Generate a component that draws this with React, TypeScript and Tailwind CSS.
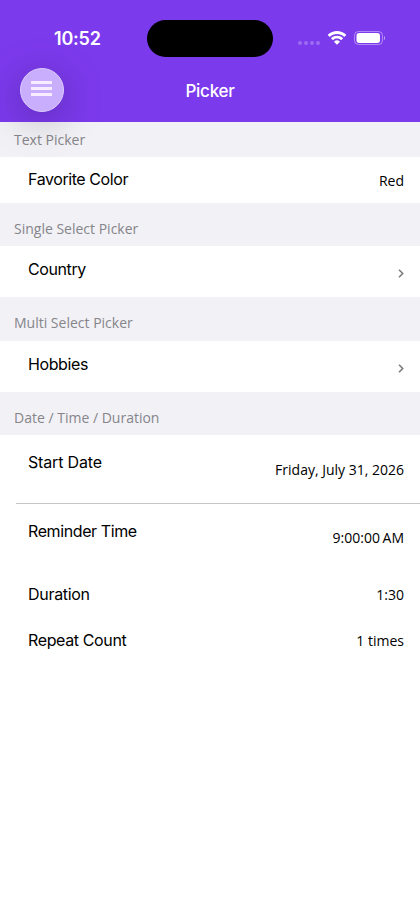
import type {ReactNode} from 'react';

function StatusBar() {
    return (
        <div className="flex h-[68px] items-start pt-5">
            <span className="ml-[54px] mt-[5px] w-[93px] text-[18px] leading-[28px] font-semibold tracking-[-0.2px]">10:52</span>
            <div className="h-[37px] w-[126px] rounded-full bg-black"/>
            <div className="ml-[25px] mt-[21px] flex gap-[2px]">
                <i className="size-[4px] rounded-full bg-white/25"/>
                <i className="size-[4px] rounded-full bg-white/25"/>
                <i className="size-[4px] rounded-full bg-white/25"/>
                <i className="size-[4px] rounded-full bg-white/25"/>
            </div>
            <svg className="ml-[7px] mt-[11px]" width="20" height="14" viewBox="0 0 20 14" fill="white">
                <path d="M10 2.9c2.7 0 5.1 1 7 2.8.2.2.4.2.5 0l1.5-1.5c.2-.2.2-.4 0-.6-5-4.8-13-4.8-18 0-.2.2-.2.4 0 .6l1.500 1.500c.2.2.4.2.6 0C4.900 3.900 7.400 2.900 10 2.900z"/>
                <path d="M10 7.600c1.400 0 2.700.5 3.800 1.400.2.200.4.200.6 0l1.500-1.500c.2-.2.2-.4 0-.6-3.300-3-8.400-3-11.700 0-.2.200-.2.400 0 .6L5.700 9c.2.200.4.200.6 0C7.300 8.100 8.600 7.600 10 7.600z"/>
                <path d="M12.800 11c.2-.2.2-.4 0-.6-1.600-1.400-4-1.400-5.600 0-.2.200-.2.400 0 .6l2.500 2.500c.2.200.4.200.6 0z"/>
            </svg>
            <svg className="ml-[7px] mt-[11px]" width="31" height="14" viewBox="0 0 31 14" fill="none">
                <rect x="0.5" y="0.5" width="28" height="13" rx="4" stroke="white" strokeOpacity="0.4"/>
                <rect x="2.5" y="2" width="23.5" height="10" rx="2.7" fill="white"/>
                <path d="M30 5v4c.7-.3 1.200-1.100 1.200-2S30.700 5.300 30 5z" fill="white" fillOpacity="0.5"/>
            </svg>
        </div>
    );
}

function NavBar() {
    return (
        <div className="grid h-11 grid-cols-[1fr_auto_1fr] items-center px-5">
            <button
                aria-label="Menu"
                className="relative z-10 flex size-11 flex-col items-start gap-[3px] rounded-full border border-[#dccbfd] bg-[#c9aefe] pt-3 pl-2.5 shadow-[0_8px_40px_rgba(0,0,0,0.28)]"
            >
                <i className="h-[3px] w-[21px] bg-[#f7edff]"/>
                <i className="h-[3px] w-[21px] bg-[#f7edff]"/>
                <i className="h-[3px] w-[21px] bg-[#f7edff]"/>
            </button>
            <h1 className="pt-px text-[17px] leading-6 font-medium tracking-[-0.25px]">Picker</h1>
        </div>
    );
}

function Section({title, className, children}: { title: string; className: string; children: ReactNode }) {
    return (
        <section>
            <h2 className={`flex items-end bg-[#f2f1f6] px-3.5 font-['Open_Sans'] text-sm text-[#85858a] ${className}`}>
                {title}
            </h2>
            {children}
        </section>
    );
}

function Row({label, value, className, valueClass}: {
    label: string;
    value?: string;
    className: string;
    valueClass: string;
}) {
    return (
        <div className={`flex items-start justify-between pr-4 pl-7 text-black ${className}`}>
            <span className="text-base leading-6">{label}</span>
            {value ? (
                <span className={`font-['Open_Sans'] text-sm leading-5 tracking-normal ${valueClass}`}>{value}</span>
            ) : (
                <svg className={valueClass} width="6" height="9" viewBox="0 0 6 9" fill="none">
                    <path d="M1 0.7 4.7 4.5 1 8.3" stroke="#7c7c80" strokeWidth="1.6"/>
                </svg>
            )}
        </div>
    );
}

export default function App() {
    return (
        <div className="h-[912px] overflow-hidden bg-white font-['Inter']">
            <header className="h-[122px] bg-[#7c3aed] text-white">
                <StatusBar/>
                <NavBar/>
            </header>
            <main>
                <Section title="Text Picker" className="h-[35px] pb-[7px]">
                    <Row label="Favorite Color" value="Red" className="h-[46px] pt-[10px] tracking-[-0.42px]" valueClass="mt-1"/>
                </Section>
                <Section title="Single Select Picker" className="h-[43px] pb-[7px]">
                    <Row label="Country" className="h-[51px] pt-[11px] tracking-[-0.4px]" valueClass="mt-3"/>
                </Section>
                <Section title="Multi Select Picker" className="h-[44px] pb-2">
                    <Row label="Hobbies" className="h-[51px] pt-[11px] tracking-[-0.4px]" valueClass="mt-3"/>
                </Section>
                <Section title="Date / Time / Duration" className="h-[43px] pb-[7px]">
                    <Row label="Start Date" value="Friday, July 31, 2026" className="h-[68px] pt-[15px] tracking-[-0.17px]" valueClass="mt-2.5"/>
                    <div className="ml-4 h-px bg-[#c6c6c8]"/>
                    <Row label="Reminder Time" value="9:00:00 AM" className="h-[67px] pt-[15px] tracking-[-0.4px]" valueClass="mt-[9px] [word-spacing:-1px]"/>
                    <Row label="Duration" value="1:30" className="h-[46px] pt-[11px] tracking-[-0.3px]" valueClass="mt-[3px]"/>
                    <Row label="Repeat Count" value="1 times" className="h-[46px] pt-[11px] tracking-[-0.37px]" valueClass="mt-[3px]"/>
                </Section>
            </main>
        </div>
    );
}
